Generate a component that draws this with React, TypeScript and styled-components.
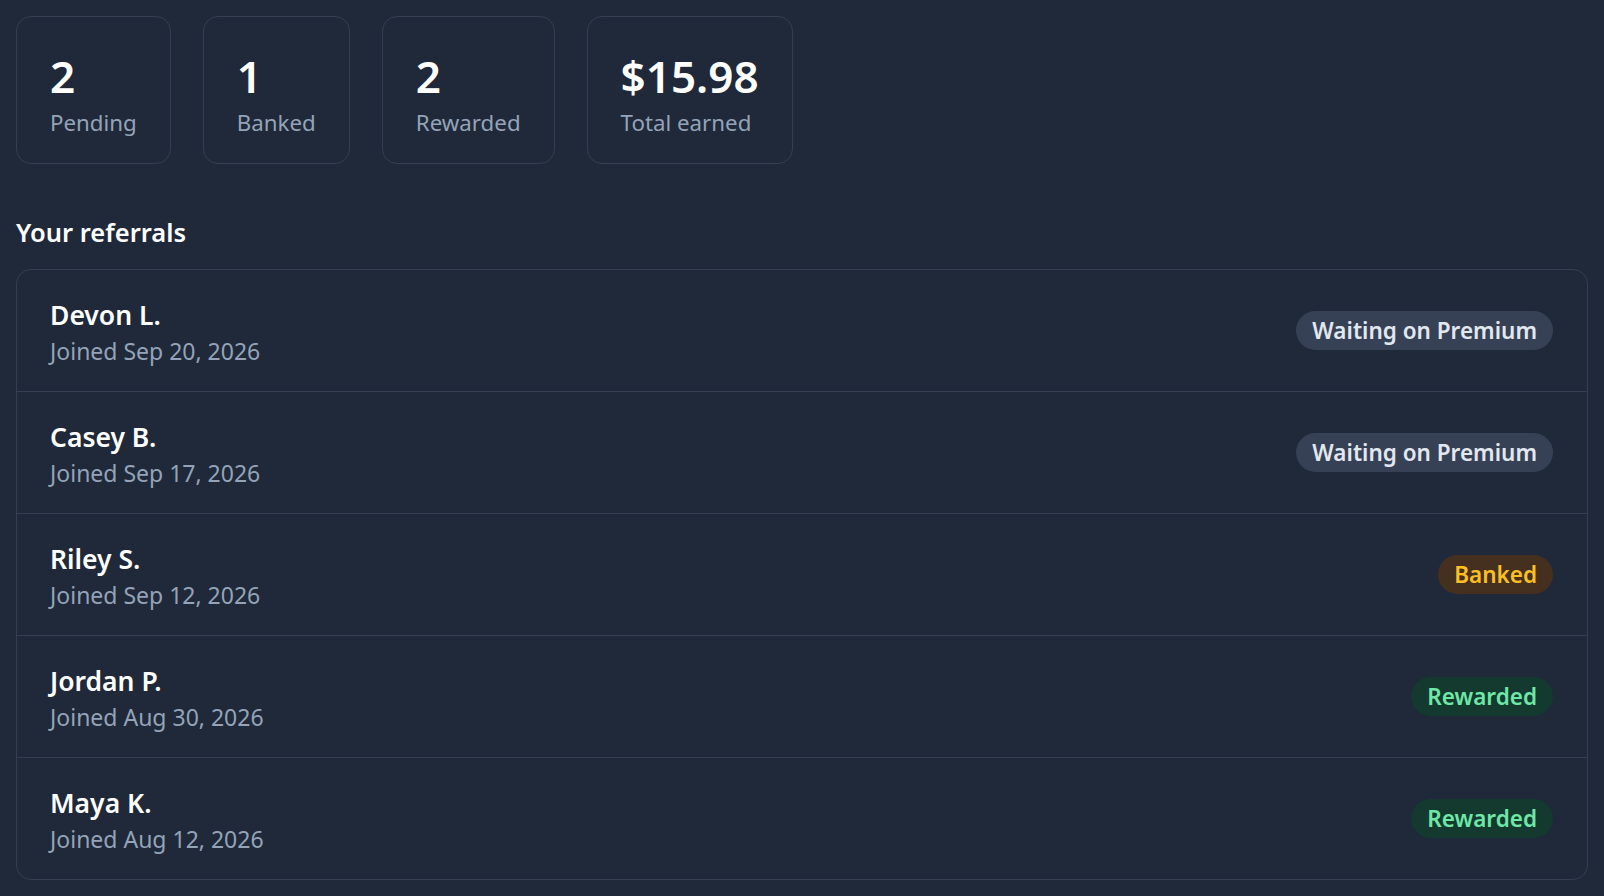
import styled, { createGlobalStyle } from "styled-components";

type Status = "waiting" | "banked" | "rewarded";

const stats = [
  { value: "2", label: "Pending" },
  { value: "1", label: "Banked" },
  { value: "2", label: "Rewarded" },
  { value: "$15.98", label: "Total earned" },
];

const referrals: { name: string; joined: string; status: Status }[] = [
  { name: "Devon L.", joined: "Joined Sep 20, 2026", status: "waiting" },
  { name: "Casey B.", joined: "Joined Sep 17, 2026", status: "waiting" },
  { name: "Riley S.", joined: "Joined Sep 12, 2026", status: "banked" },
  { name: "Jordan P.", joined: "Joined Aug 30, 2026", status: "rewarded" },
  { name: "Maya K.", joined: "Joined Aug 12, 2026", status: "rewarded" },
];

const statusText: Record<Status, string> = {
  waiting: "Waiting on Premium",
  banked: "Banked",
  rewarded: "Rewarded",
};

const badgeColors: Record<Status, { bg: string; fg: string }> = {
  waiting: { bg: "#374155", fg: "#e2e8f0" },
  banked: { bg: "#45301f", fg: "#fbbf24" },
  rewarded: { bg: "#14392f", fg: "#6ee7a7" },
};

const GlobalStyle = createGlobalStyle`
  html, body {
    margin: 0;
    background: #1f2939;
  }
  body {
    font-family: "Noto Sans", "Open Sans", sans-serif;
    color: #f1f5f9;
  }
`;

const Page = styled.div`
  padding: 16px;
  min-height: 896px;
  box-sizing: border-box;
`;

const StatsRow = styled.div`
  display: flex;
  gap: 32px;
`;

const StatCard = styled.div`
  border: 1px solid #343f52;
  border-radius: 15px;
  padding: 32px 33px 24px;
  display: flex;
  flex-direction: column;
  gap: 4px;
`;

const StatValue = styled.div`
  font-size: 44px;
  font-weight: 600;
  line-height: 54px;
  color: #ffffff;
`;

const StatLabel = styled.div`
  font-size: 22.3px;
  line-height: 32px;
  color: #94a3b8;
`;

const SectionTitle = styled.h2`
  margin: 51px 0 20px;
  font-size: 25.5px;
  font-weight: 600;
  line-height: 34px;
  color: #ffffff;
`;

const List = styled.div`
  border: 1px solid #343f52;
  border-radius: 15px;
  overflow: hidden;
`;

const Row = styled.div`
  display: flex;
  align-items: center;
  justify-content: space-between;
  height: 121px;
  padding: 0 34px 0 33px;
  & + & {
    border-top: 1px solid #343f52;
  }
`;

const Person = styled.div`
  display: flex;
  flex-direction: column;
  padding-top: 4px;
`;

const Name = styled.div`
  font-size: 26.5px;
  font-weight: 600;
  line-height: 37px;
  color: #ffffff;
`;

const Joined = styled.div`
  font-size: 23px;
  line-height: 35px;
  color: #94a3b8;
`;

const Badge = styled.span<{ $status: Status }>`
  display: inline-flex;
  align-items: center;
  height: 39px;
  padding: 0 16px;
  border-radius: 20px;
  font-size: 22.5px;
  font-weight: 600;
  background: ${(p) => badgeColors[p.$status].bg};
  color: ${(p) => badgeColors[p.$status].fg};
`;

export default function App() {
  return (
    <>
      <GlobalStyle />
      <Page>
        <StatsRow>
          {stats.map((s) => (
            <StatCard key={s.label}>
              <StatValue>{s.value}</StatValue>
              <StatLabel>{s.label}</StatLabel>
            </StatCard>
          ))}
        </StatsRow>
        <SectionTitle>Your referrals</SectionTitle>
        <List>
          {referrals.map((r) => (
            <Row key={r.name}>
              <Person>
                <Name>{r.name}</Name>
                <Joined>{r.joined}</Joined>
              </Person>
              <Badge $status={r.status}>{statusText[r.status]}</Badge>
            </Row>
          ))}
        </List>
      </Page>
    </>
  );
}
